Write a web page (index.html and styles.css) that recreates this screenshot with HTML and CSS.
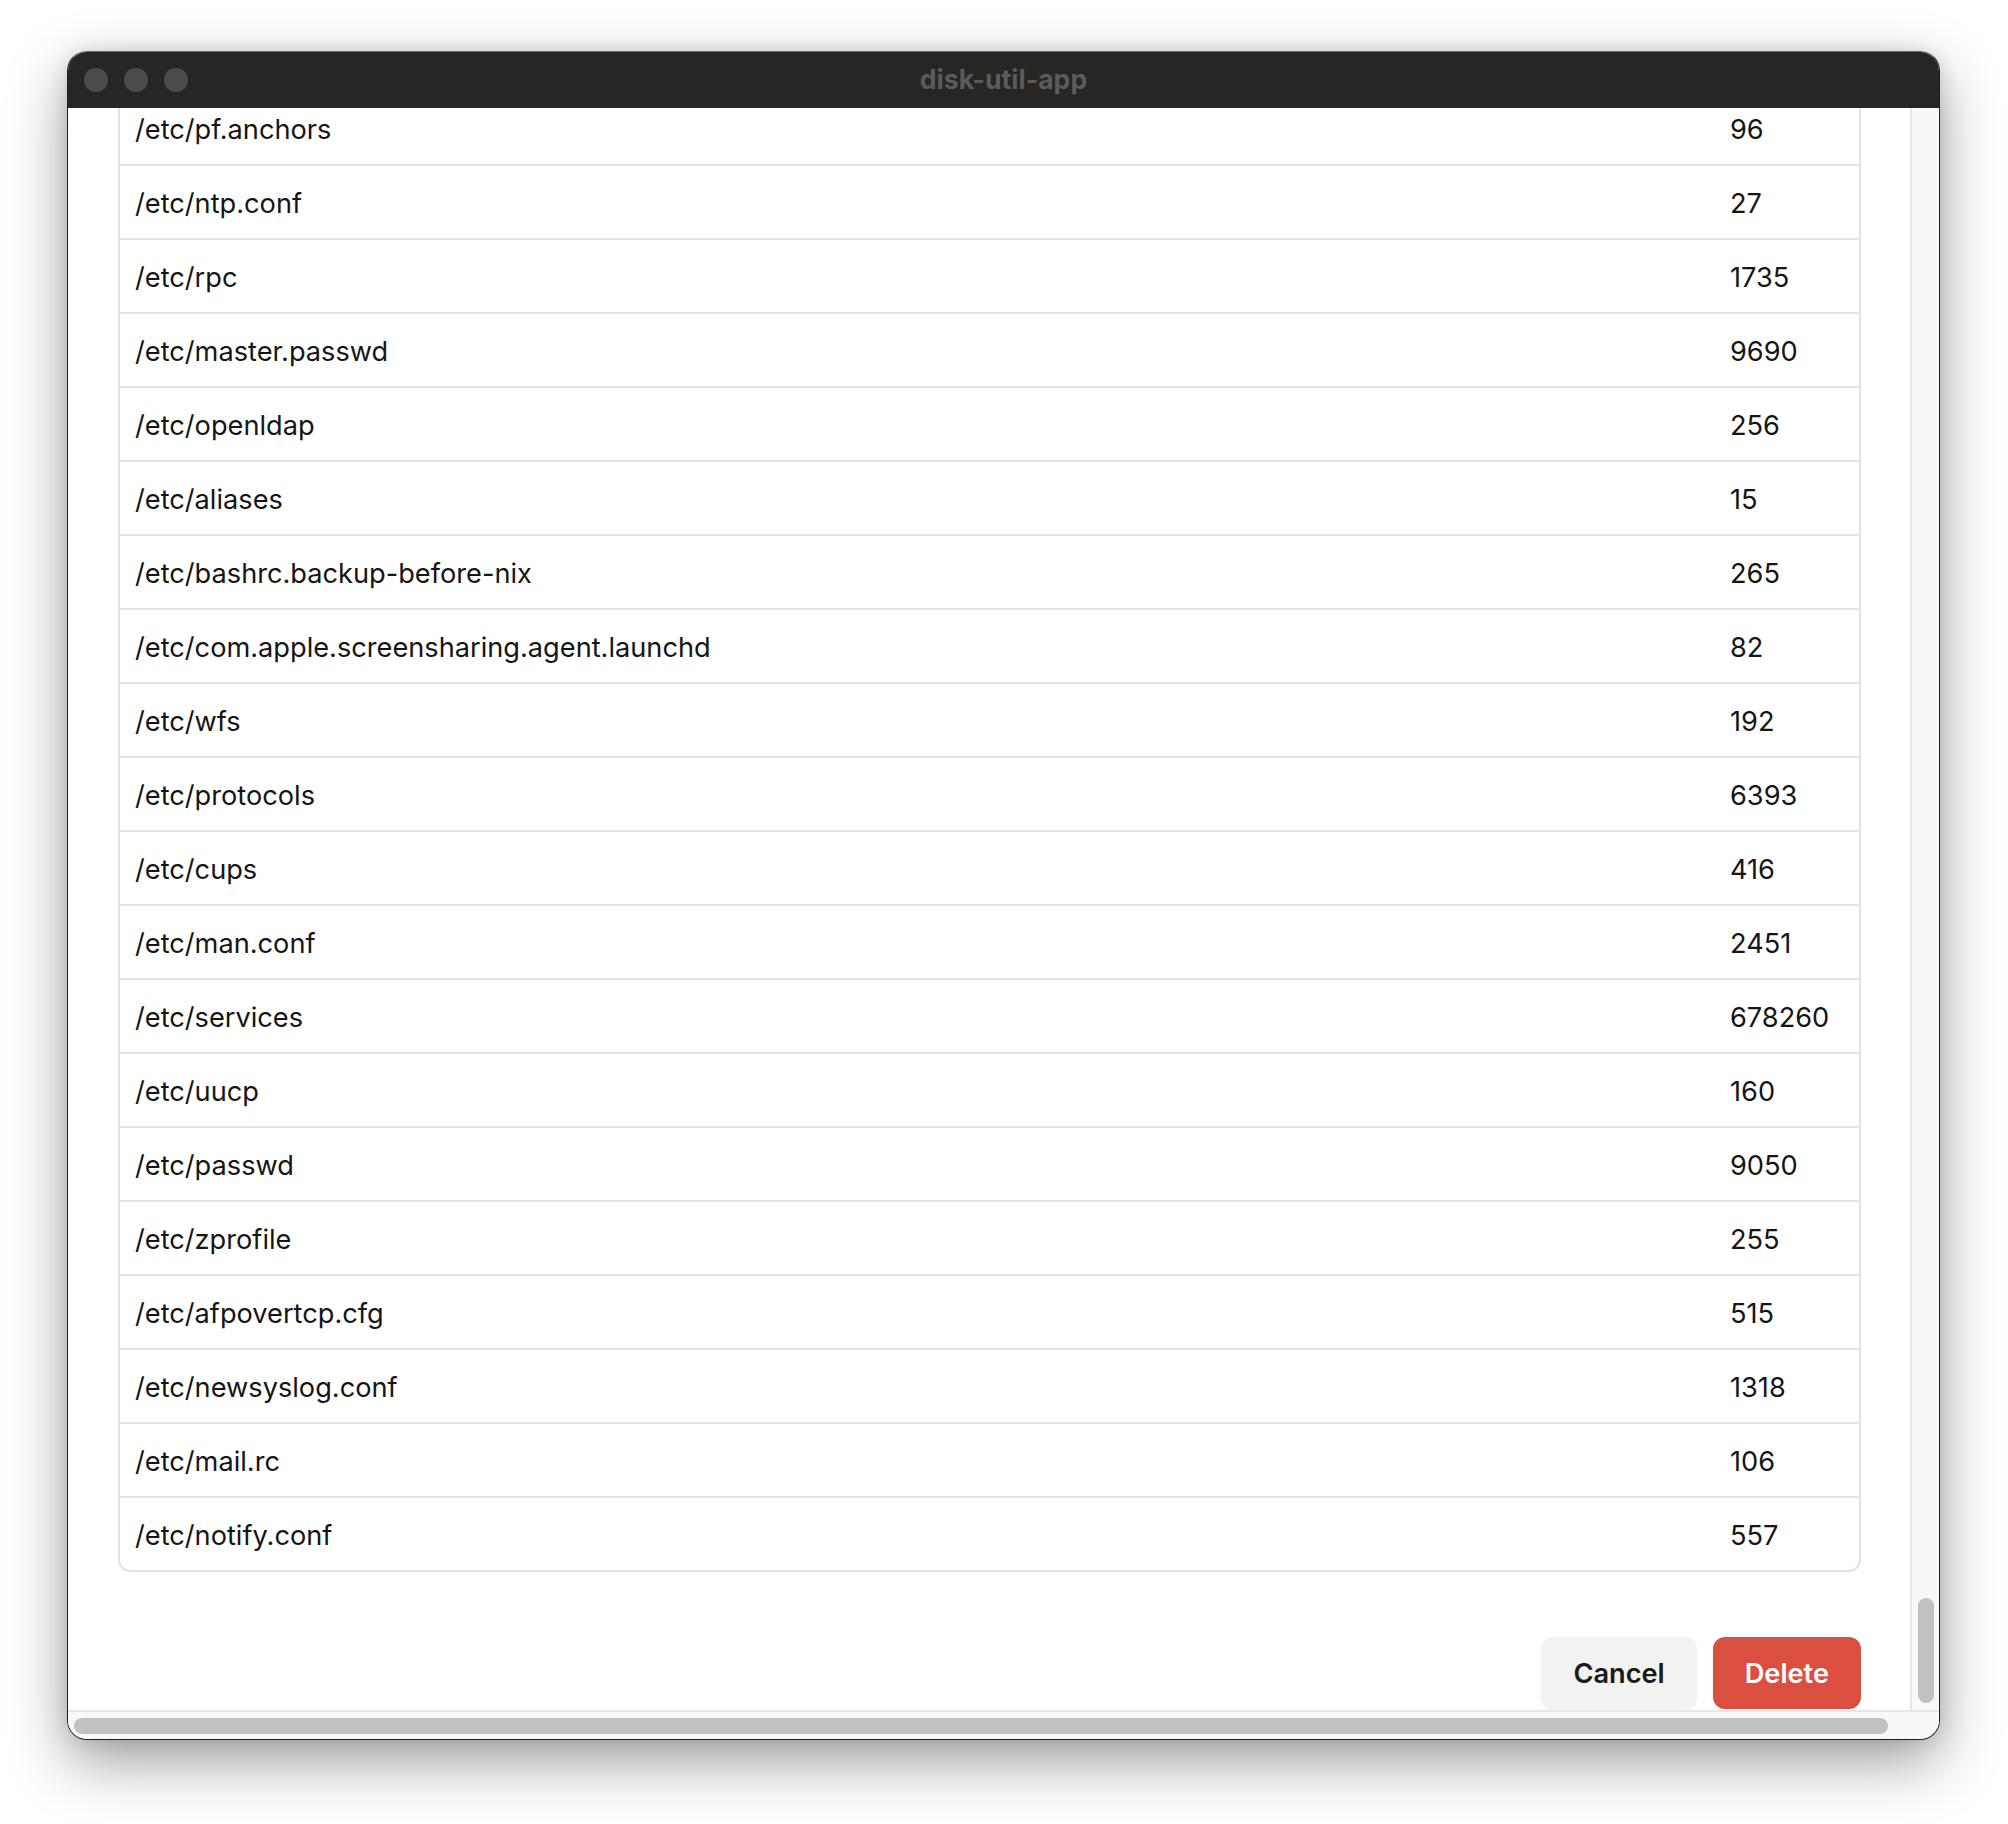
FILE: index.html
```html
<!DOCTYPE html>
<html lang="en">
<head>
<meta charset="utf-8">
<title>disk-util-app</title>
<link rel="stylesheet" href="styles.css">
</head>
<body>
<div class="window">
  <div class="titlebar">
    <div class="lights">
      <span class="light"></span>
      <span class="light"></span>
      <span class="light"></span>
    </div>
    <div class="title">disk-util-app</div>
  </div>
  <div class="main">
    <div class="content">
      <div class="table">
        <div class="row"><div class="cell path">/etc/pf.anchors</div><div class="cell size">96</div></div>
        <div class="row"><div class="cell path">/etc/ntp.conf</div><div class="cell size">27</div></div>
        <div class="row"><div class="cell path">/etc/rpc</div><div class="cell size">1735</div></div>
        <div class="row"><div class="cell path">/etc/master.passwd</div><div class="cell size">9690</div></div>
        <div class="row"><div class="cell path">/etc/openldap</div><div class="cell size">256</div></div>
        <div class="row"><div class="cell path">/etc/aliases</div><div class="cell size">15</div></div>
        <div class="row"><div class="cell path">/etc/bashrc.backup-before-nix</div><div class="cell size">265</div></div>
        <div class="row"><div class="cell path">/etc/com.apple.screensharing.agent.launchd</div><div class="cell size">82</div></div>
        <div class="row"><div class="cell path">/etc/wfs</div><div class="cell size">192</div></div>
        <div class="row"><div class="cell path">/etc/protocols</div><div class="cell size">6393</div></div>
        <div class="row"><div class="cell path">/etc/cups</div><div class="cell size">416</div></div>
        <div class="row"><div class="cell path">/etc/man.conf</div><div class="cell size">2451</div></div>
        <div class="row"><div class="cell path">/etc/services</div><div class="cell size">678260</div></div>
        <div class="row"><div class="cell path">/etc/uucp</div><div class="cell size">160</div></div>
        <div class="row"><div class="cell path">/etc/passwd</div><div class="cell size">9050</div></div>
        <div class="row"><div class="cell path">/etc/zprofile</div><div class="cell size">255</div></div>
        <div class="row"><div class="cell path">/etc/afpovertcp.cfg</div><div class="cell size">515</div></div>
        <div class="row"><div class="cell path">/etc/newsyslog.conf</div><div class="cell size">1318</div></div>
        <div class="row"><div class="cell path">/etc/mail.rc</div><div class="cell size">106</div></div>
        <div class="row"><div class="cell path">/etc/notify.conf</div><div class="cell size">557</div></div>
      </div>
      <div class="actions">
        <button class="btn btn-cancel">Cancel</button>
        <button class="btn btn-delete">Delete</button>
      </div>
    </div>
    <div class="vtrack"><div class="vthumb"></div></div>
  </div>
  <div class="htrack"><div class="hthumb"></div></div>
</div>
</body>
</html>
```

FILE: styles.css
```css
* { box-sizing: border-box; }

html, body {
  margin: 0;
  background: #ffffff;
}

body {
  padding: 51px 68px 84px 67px;
  font-family: Inter, "Noto Sans", "Liberation Sans", sans-serif;
}

.window {
  height: 1689px;
  display: flex;
  flex-direction: column;
  border: 1px solid #1d1d1d;
  border-top-color: #6a6a6a;
  border-radius: 20px;
  overflow: hidden;
  background: #ffffff;
  box-shadow: 0 22px 60px rgba(0, 0, 0, 0.38), 0 0 18px rgba(0, 0, 0, 0.12);
}

.titlebar {
  flex: 0 0 56px;
  background: #262624;
  display: flex;
  align-items: center;
  position: relative;
}

.lights {
  display: flex;
  gap: 16px;
  padding-left: 16px;
}

.light {
  width: 24px;
  height: 24px;
  border-radius: 50%;
  background: #4b4b4a;
}

.title {
  position: absolute;
  left: 0;
  right: 0;
  top: 50%;
  transform: translateY(-54%);
  text-align: center;
  color: #5b5b5a;
  font-weight: 700;
  font-size: 26.6px;
}

.main {
  flex: 1 1 auto;
  display: flex;
  min-height: 0;
}

.content {
  flex: 1 1 auto;
  overflow: hidden;
  display: flex;
  flex-direction: column;
  justify-content: flex-end;
  padding: 0 49px 1px 50px;
}

.table {
  flex: 0 0 auto;
  border: 2px solid #e2e2e2;
  border-radius: 12px;
}

.row {
  display: grid;
  grid-template-columns: 1fr 144px;
  height: 74px;
  border-bottom: 2px solid #e2e2e2;
  align-items: center;
}

.row:last-child {
  height: 72px;
  border-bottom: none;
}

.cell {
  font-size: 27.2px;
  color: #151515;
  white-space: nowrap;
  padding-top: 3px;
}

.path { padding-left: 15px; }
.size { padding-left: 15px; }

.actions {
  flex: 0 0 auto;
  display: flex;
  justify-content: flex-end;
  gap: 16px;
  margin-top: 65px;
}

.btn {
  height: 72px;
  border: none;
  border-radius: 12px;
  padding: 0 32px;
  font-family: Inter, "Noto Sans", "Liberation Sans", sans-serif;
  font-size: 27.2px;
  font-weight: 600;
}

.btn-cancel {
  background: #f2f2f2;
  color: #1a1a1a;
  box-shadow: 0 1px 3px rgba(0, 0, 0, 0.06);
}

.btn-delete {
  background: #db4f41;
  color: #ffffff;
}

.vtrack {
  flex: 0 0 29px;
  background: #f8f8f8;
  border-left: 2px solid #e6e6e6;
  display: flex;
  flex-direction: column;
  justify-content: flex-end;
  align-items: center;
  padding-bottom: 7px;
}

.vthumb {
  width: 16px;
  height: 105px;
  border-radius: 8px;
  background: #c1c1c1;
}

.htrack {
  flex: 0 0 29px;
  background: #f8f8f8;
  border-top: 2px solid #e6e6e6;
  padding: 6px 0 0 6px;
}

.hthumb {
  width: 1814px;
  height: 16px;
  border-radius: 8px;
  background: #c1c1c1;
}
```
